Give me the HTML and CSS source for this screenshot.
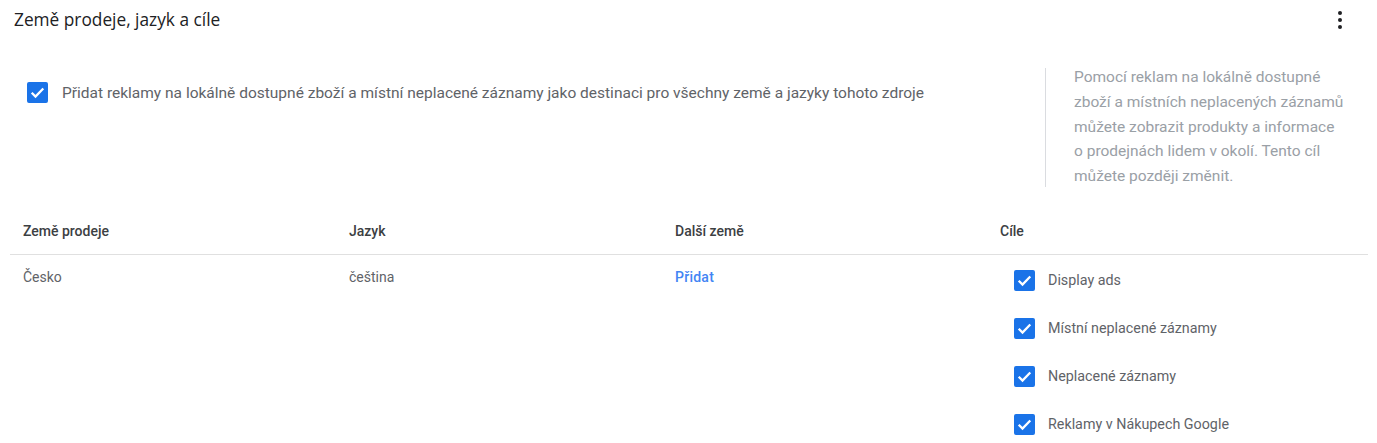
FILE: index.html
```html
<!doctype html>
<html lang="cs">
  <head>
    <meta charset="UTF-8" />
    <meta name="viewport" content="width=device-width, initial-scale=1.0" />
    <title>Země prodeje, jazyk a cíle</title>
    <link rel="stylesheet" href="styles.css">
  </head>

  <body>
    <div class="card">
      <header class="card-header">
        <h2>Země prodeje, jazyk a cíle</h2>
        <button class="menu" aria-label="Další možnosti">
          <svg width="4" height="18" viewBox="0 0 4 18">
            <circle cx="2" cy="2" r="2" />
            <circle cx="2" cy="9" r="2" />
            <circle cx="2" cy="16" r="2" />
          </svg>
        </button>
      </header>

      <section class="intro">
        <label class="check-row main">
          <span class="checkbox checked">
            <svg viewBox="0 0 20 20"><path d="M4.5 10.2l3.6 3.6 7.4-7.6" /></svg>
          </span>
          <span>Přidat reklamy na lokálně dostupné zboží a místní neplacené záznamy jako destinaci pro všechny země a jazyky tohoto zdroje</span>
        </label>
        <aside class="hint">
          <p>
            Pomocí reklam na lokálně dostupné zboží a místních neplacených
            záznamů můžete zobrazit produkty a informace o prodejnách lidem
            v okolí. Tento cíl můžete později změnit.
          </p>
        </aside>
      </section>

      <div class="table">
        <div class="row head">
          <div class="cell">Země prodeje</div>
          <div class="cell">Jazyk</div>
          <div class="cell">Další země</div>
          <div class="cell">Cíle</div>
        </div>
        <div class="row">
          <div class="cell">Česko</div>
          <div class="cell">čeština</div>
          <div class="cell"><a href="#" class="link">Přidat</a></div>
          <div class="cell goals">
            <label class="check-row goal">
              <span class="checkbox checked">
                <svg viewBox="0 0 20 20"><path d="M4.5 10.2l3.6 3.6 7.4-7.6" /></svg>
              </span>
              <span>Display ads</span>
            </label>
            <label class="check-row goal">
              <span class="checkbox checked">
                <svg viewBox="0 0 20 20"><path d="M4.5 10.2l3.6 3.6 7.4-7.6" /></svg>
              </span>
              <span>Místní neplacené záznamy</span>
            </label>
            <label class="check-row goal">
              <span class="checkbox checked">
                <svg viewBox="0 0 20 20"><path d="M4.5 10.2l3.6 3.6 7.4-7.6" /></svg>
              </span>
              <span>Neplacené záznamy</span>
            </label>
            <label class="check-row goal">
              <span class="checkbox checked">
                <svg viewBox="0 0 20 20"><path d="M4.5 10.2l3.6 3.6 7.4-7.6" /></svg>
              </span>
              <span>Reklamy v Nákupech Google</span>
            </label>
          </div>
        </div>
      </div>
    </div>
  </body>
</html>
```

FILE: styles.css
```css
html {
  font-family: Roboto, "Liberation Sans", Arial, sans-serif;
  background: #fff;
  color: #5f6368;
}
body {
  margin: 0;
}
p {
  margin: 0;
}
.card-header {
  display: flex;
  justify-content: space-between;
  align-items: center;
  height: 38px;
  padding: 0 35px 0 14px;
}
.card-header h2 {
  margin: 0;
  font-family: "Open Sans", Roboto, sans-serif;
  font-size: 17.3px;
  font-weight: 400;
  color: #202124;
}
.menu {
  border: none;
  background: transparent;
  padding: 0;
  display: flex;
  cursor: pointer;
  margin-top: 2px;
}
.menu svg {
  fill: #202124;
}
.intro {
  display: flex;
  margin-top: 28px;
  height: 122px;
}
.check-row {
  display: flex;
  align-items: center;
  cursor: pointer;
}
.check-row.main {
  flex: 1;
  align-self: flex-start;
  padding: 16px 0 0 27px;
  font-size: 15.5px;
  color: #5f6368;
  gap: 14px;
}
.checkbox {
  flex: none;
  width: 21px;
  height: 21px;
  border-radius: 2px;
  box-sizing: border-box;
  border: 2px solid #5f6368;
}
.checkbox.checked {
  background: #1a73e8;
  border-color: #1a73e8;
}
.checkbox svg {
  display: block;
  width: 21px;
  height: 21px;
  margin: -2px;
  fill: none;
  stroke: #fff;
  stroke-width: 2.2;
}
.hint {
  width: 272px;
  margin-right: 31px;
  padding-left: 28px;
  border-left: 1px solid #dadce0;
  margin-top: 2px;
  height: 119px;
}
.hint p {
  margin-top: -3px;
  font-size: 15.5px;
  line-height: 24.8px;
  color: #9aa0a6;
}
.table {
  margin: 22px 9px 0 10px;
}
.row {
  display: grid;
  grid-template-columns: 326px 326px 325px 1fr;
}
.row.head {
  height: 45px;
  box-sizing: border-box;
  padding-bottom: 3px;
  align-items: center;
  border-bottom: 1px solid #e0e0e0;
  font-size: 14px;
  font-weight: 500;
  color: #3c4043;
}
.cell {
  padding-left: 13px;
}
.row:not(.head) .cell {
  font-size: 14px;
  line-height: 20px;
  padding-top: 12px;
}
.row:not(.head) .cell.goals {
  padding-top: 1px;
  padding-left: 27px;
}
.link {
  color: #4285f4;
  font-weight: 500;
  font-size: 14px;
  letter-spacing: 0.25px;
  text-decoration: none;
}
.check-row.goal {
  height: 48px;
  gap: 13px;
  font-size: 14.3px;
  color: #5f6368;
}
```
